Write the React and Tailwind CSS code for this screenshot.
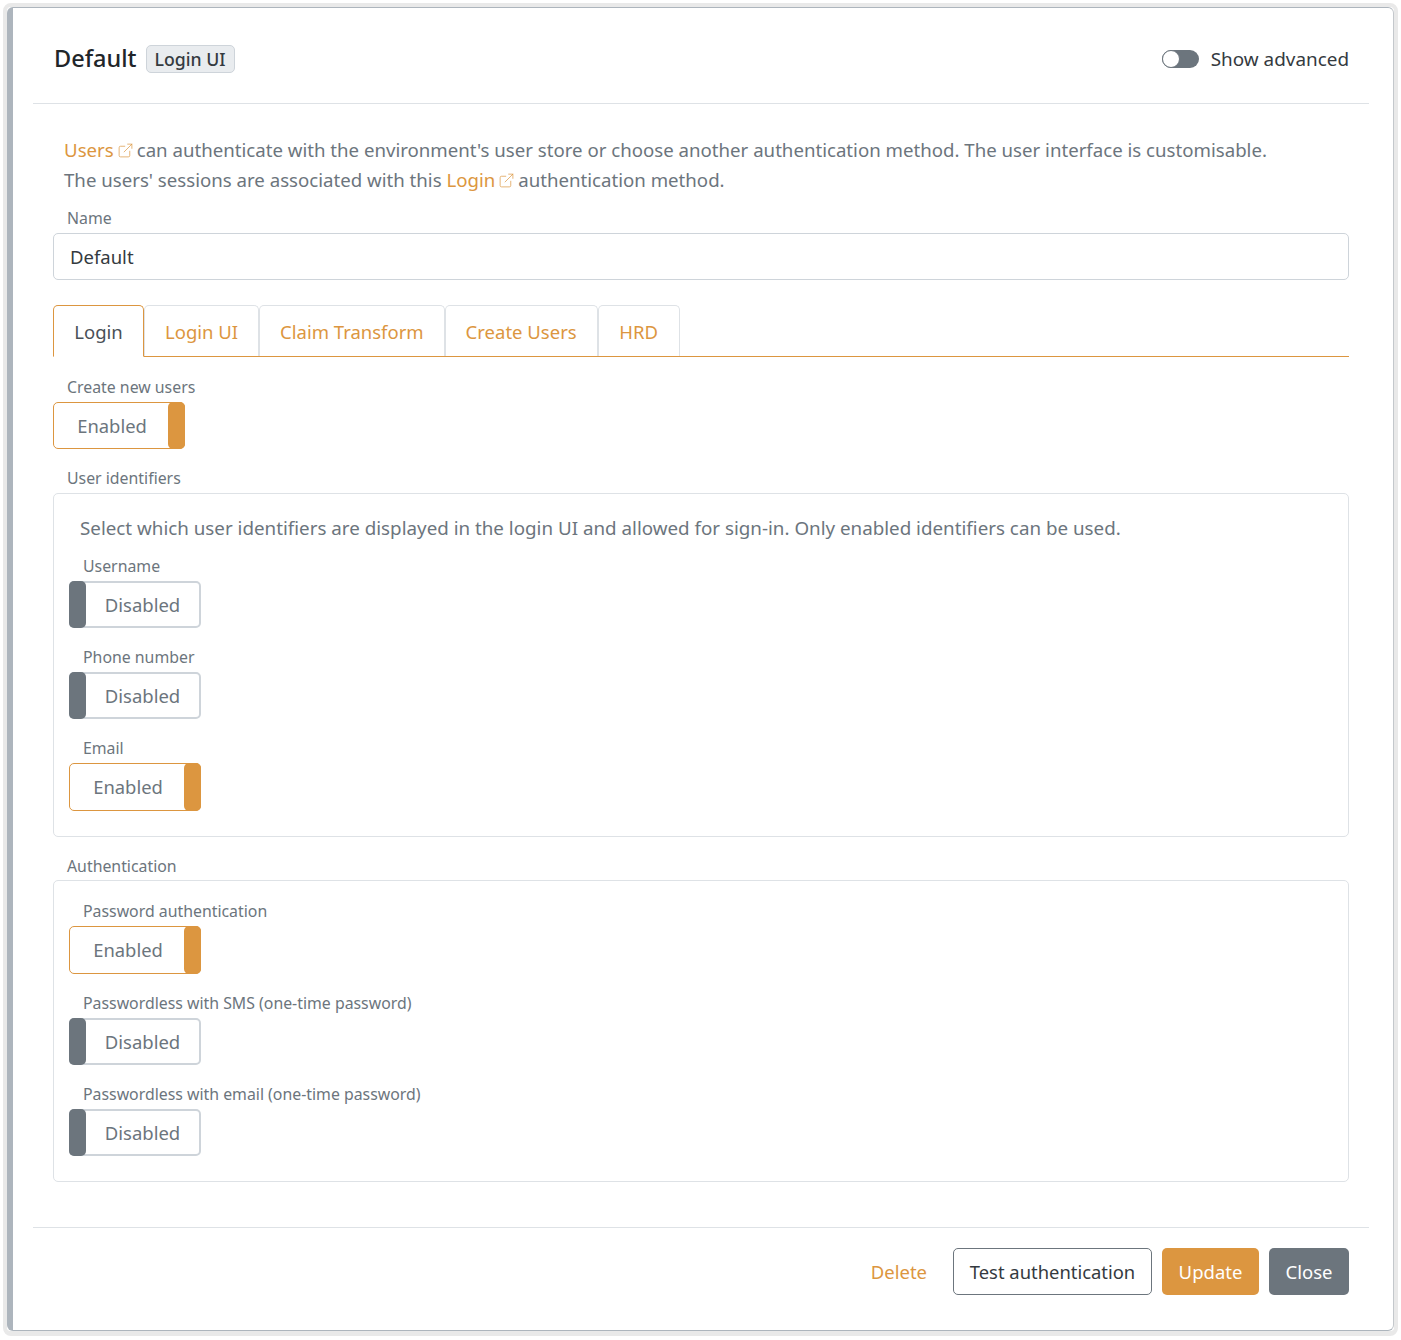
import React from 'react';
import { ExternalLink } from 'lucide-react';

const IDENTIFIERS = [
  { label: 'Username', on: false },
  { label: 'Phone number', on: false },
  { label: 'Email', on: true },
];

const AUTH = [
  { label: 'Password authentication', on: true },
  { label: 'Passwordless with SMS (one-time password)', on: false },
  { label: 'Passwordless with email (one-time password)', on: false },
];

const TABS = ['Login UI', 'Claim Transform', 'Create Users'];

function Label({ children }) {
  return <div className="mb-[3px] h-[24px] pl-[14px] text-[15.85px] leading-[24px] text-[#6c757d]">{children}</div>;
}

function EnabledToggle({ height }) {
  return (
    <div className={`flex w-[132px] items-stretch rounded-[5px] border border-[#dc9640] bg-white ${height}`}>
      <div className="flex flex-1 items-center justify-center pl-[2px] text-[18.4px] text-[#6c757d]">Enabled</div>
      <div className="-my-px -mr-px w-[17px] rounded-[5px] bg-[#dc9640]" />
    </div>
  );
}

function DisabledToggle() {
  return (
    <div className="flex h-[47px] w-[132px] items-stretch rounded-[5px] border-2 border-[#ced4da] bg-white">
      <div className="-my-[2px] -ml-[2px] w-[17px] rounded-[5px] bg-[#6c757d]" />
      <div className="flex flex-1 items-center justify-center pt-px text-[18.5px] text-[#6c757d]">Disabled</div>
    </div>
  );
}

function Field({ label, on }) {
  return (
    <div className="mb-[17px] last:mb-0">
      <Label>{label}</Label>
      {on ? <EnabledToggle height="h-[48px]" /> : <DisabledToggle />}
    </div>
  );
}

function DocLink({ children }) {
  return (
    <span className="text-[#dc9640]">
      {children}
      <ExternalLink className="ml-[3px] mr-[3px] inline-block align-[-2px]" size={17} strokeWidth={1} />
    </span>
  );
}

export default function App() {
  return (
    <div className="min-h-[1340px] bg-white pl-[3px] pt-[3px] font-['Noto_Sans',sans-serif] text-[18.5px]">
      <div className="w-[1395px] rounded-[8px] border-[4px] border-b-[5px] border-[#e9e9e9]">
        <div className="h-[1324px] rounded-[6px] border border-l-[6px] border-[#adb5bd] border-r-[#c4c8cc] bg-white">
          <div className="ml-[20px] mr-[24px] flex h-[96px] items-center justify-between border-b border-[#dee2e6] pl-[21px] pr-[20px] pt-[6px]">
            <div className="flex items-center gap-[9px]">
              <span className="text-[23.5px] font-medium text-[#212529]">Default</span>
              <span className="rounded-[5px] border border-[#ced4da] bg-[#e9ecef] px-[8px] text-[17.7px] font-medium leading-[26px] text-[#343a40]">
                Login UI
              </span>
            </div>
            <div className="mt-px flex items-center gap-[12px] text-[18.9px] text-[#343a40]">
              <div className="relative h-[18px] w-[37px] rounded-full bg-[#6c757d]">
                <div className="absolute left-0 top-0 h-[18px] w-[18px] rounded-full border border-[#6c757d] bg-white" />
              </div>
              Show advanced
            </div>
          </div>

          <div className="ml-[40px] mr-[44px] mt-[31px]">
            <p className="pl-[11px] text-[18.65px] leading-[30px] text-[#6c757d]">
              <DocLink>Users</DocLink>can authenticate with the environment's user store or choose another authentication method. The user interface is customisable.
              <br />
              The users' sessions are associated with this <DocLink>Login</DocLink>authentication method.
            </p>

            <div className="mt-[11px]">
              <Label>Name</Label>
              <div className="flex h-[47px] items-center rounded-[5px] border border-[#ced4da] px-[16px] pt-px text-[#343a40]">Default</div>
            </div>

            <div className="mt-[25px] flex h-[52px] border-b border-[#dc9640]">
              <div className="-mb-px flex h-[52px] w-[91px] items-center justify-center rounded-t-[5px] border border-b-white border-[#dc9640] bg-white pt-px text-[#495057]">
                Login
              </div>
              {TABS.map((tab) => (
                <div key={tab} className="flex h-[51px] items-center rounded-t-[5px] border-x border-t border-[#dee2e6] px-[20px] pt-px text-[#dc9640]">
                  {tab}
                </div>
              ))}
              <div className="flex h-[51px] w-[82px] items-center justify-center rounded-t-[5px] border-x border-t border-[#dee2e6] pt-px text-[#dc9640]">
                HRD
              </div>
            </div>

            <div className="mt-[18px]">
              <Label>Create new users</Label>
              <EnabledToggle height="h-[47px]" />
            </div>

            <div className="mt-[17px]">
              <Label>User identifiers</Label>
              <div className="h-[344px] rounded-[5px] border border-[#dee2e6] px-[15px] pt-[19px]">
                <p className="mb-[11px] pl-[11px] text-[18.8px] leading-[30px] text-[#6c757d]">
                  Select which user identifiers are displayed in the login UI and allowed for sign-in. Only enabled identifiers can be used.
                </p>
                {IDENTIFIERS.map((item) => (
                  <Field key={item.label} {...item} />
                ))}
              </div>
            </div>

            <div className="mt-[17px]">
              <div className="h-[26px] pl-[14px] text-[15.85px] leading-[24px] text-[#6c757d]">Authentication</div>
              <div className="h-[302px] rounded-[5px] border border-[#dee2e6] px-[15px] pt-[18px]">
                {AUTH.map((item) => (
                  <Field key={item.label} {...item} />
                ))}
              </div>
            </div>
          </div>

          <div className="ml-[20px] mr-[24px] mt-[45px] flex h-[88px] items-start justify-end gap-[10px] border-t border-[#dee2e6] pr-[20px] pt-[20px]">
            <button className="mr-[16px] h-[47px] pt-px text-[#dc9640]">Delete</button>
            <button className="h-[47px] w-[199px] rounded-[5px] border border-[#6c757d] bg-white pt-px text-[18.4px] text-[#343a40]">Test authentication</button>
            <button className="h-[47px] w-[97px] rounded-[5px] bg-[#dc9640] pt-px text-white">Update</button>
            <button className="h-[47px] w-[80px] rounded-[5px] bg-[#6c757d] pt-px text-white">Close</button>
          </div>
        </div>
      </div>
    </div>
  );
}
